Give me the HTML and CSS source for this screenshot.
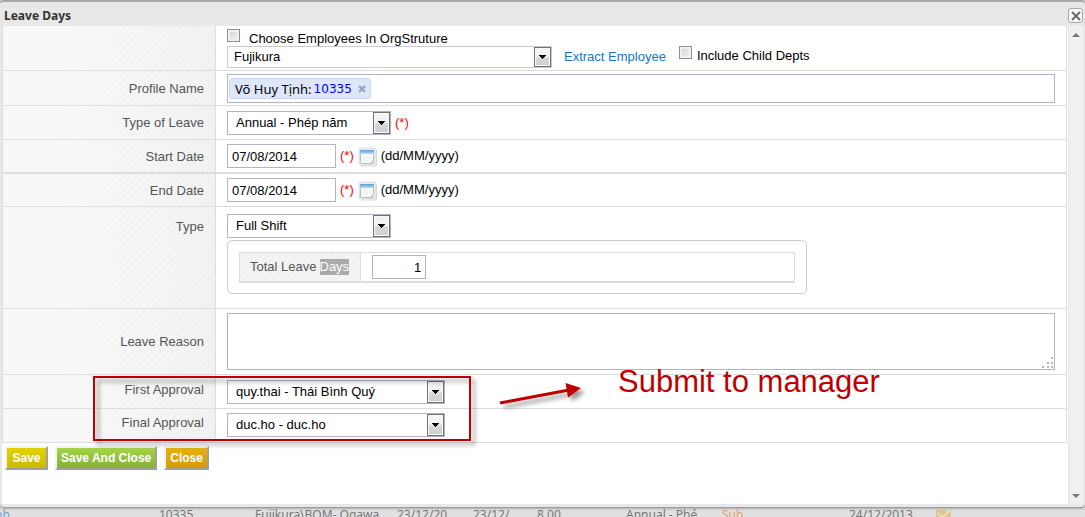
FILE: index.html
```html
<!DOCTYPE html>
<html lang="en">
<head>
<meta charset="utf-8">
<title>Leave Days</title>
<link rel="stylesheet" href="styles.css">
</head>
<body>
<svg class="defs" aria-hidden="true">
  <defs>
    <linearGradient id="calhead" x1="0" y1="0" x2="0" y2="1"><stop offset="0" stop-color="#5f9fd0"/><stop offset="1" stop-color="#b9dcf3"/></linearGradient>
    <symbol id="calendar" viewBox="0 0 20 20">
      <rect x="1" y="1" width="17" height="17" rx="2" fill="#ececec" stroke="#dcdcdc"/>
      <path d="M18.500 3V19H3" fill="none" stroke="#d8d8d8"/>
      <rect x="2.500" y="3.500" width="13" height="13" rx="1" fill="#fafafa" stroke="#b4bcc2"/>
      <rect x="2" y="3" width="14" height="4" fill="url(#calhead)"/>
      <path d="M5 9.500h9M5 11.500h9M5 13.500h6" stroke="#e6ebee" stroke-dasharray="2 1"/>
      <path d="M12 16l4-4v4z" fill="#c6ccd0"/>
    </symbol>
    <symbol id="arrow" viewBox="0 0 7 4"><path d="M0 0h7v1h-1v1h-1v1h-1v1h-1v-1h-1v-1h-1v-1h-1z" fill="#000"/></symbol>
  </defs>
</svg>
<section class="dialog">
  <header class="titlebar">
    <h1 class="title">Leave Days</h1>
    <button class="close" type="button" aria-label="Close window"><svg viewBox="0 0 10 10" width="10" height="10"><path d="M1 1l8 8M9 1l-8 8" stroke="#6a6a6a" stroke-width="2"/></svg></button>
  </header>
  <div class="body">
    <form class="form">
      <div class="rows">
        <div class="row">
          <div class="label"></div>
          <div class="field org">
            <label class="check"><input class="box" type="checkbox"><span class="choose">Choose Employees In OrgStruture</span></label>
            <div class="line">
              <span class="select wide"><select aria-label="Department"><option>Fujikura</option></select><span class="drop"><svg><use href="#arrow"/></svg></span></span>
              <a class="link" href="#">Extract Employee</a>
              <label class="check child"><input class="box" type="checkbox"><span class="include">Include Child Depts</span></label>
            </div>
          </div>
        </div>
        <div class="row">
          <label class="label" for="profile">Profile Name</label>
          <div class="field profile"><div class="tags"><span class="tag">Võ Huy Tịnh:<span class="code">10335</span><button class="remove" type="button" aria-label="Remove"><svg viewBox="0 0 8 8" width="8" height="8"><path d="M1 1l6 6M7 1l-6 6" stroke="#98a3bd" stroke-width="2.400"/></svg></button></span><input class="taginput" id="profile" type="text"></div></div>
        </div>
        <div class="row">
          <label class="label" for="leavetype">Type of Leave</label>
          <div class="field"><span class="select"><select id="leavetype"><option>Annual - Phép năm</option></select><span class="drop"><svg><use href="#arrow"/></svg></span></span><span class="req">(*)</span></div>
        </div>
        <div class="row thick">
          <label class="label" for="start">Start Date</label>
          <div class="field even"><input class="text date" id="start" type="text" value="07/08/2014"><span class="req">(*)</span><svg class="cal"><use href="#calendar"/></svg><span class="format">(dd/MM/yyyy)</span></div>
        </div>
        <div class="row">
          <label class="label" for="end">End Date</label>
          <div class="field even"><input class="text date" id="end" type="text" value="07/08/2014"><span class="req">(*)</span><svg class="cal"><use href="#calendar"/></svg><span class="format">(dd/MM/yyyy)</span></div>
        </div>
        <div class="row">
          <label class="label top" for="shift">Type</label>
          <div class="field stack">
            <span class="select"><select id="shift"><option>Full Shift</option></select><span class="drop"><svg><use href="#arrow"/></svg></span></span>
            <div class="panel">
              <div class="total">
                <label class="totallabel" for="total">Total Leave <span class="picked">Days</span></label>
                <div class="totalfield"><input class="text number" id="total" type="text" value="1"></div>
              </div>
            </div>
          </div>
        </div>
        <div class="row">
          <label class="label" for="reason">Leave Reason</label>
          <div class="field even"><div class="areawrap"><textarea class="area" id="reason"></textarea><svg class="grip" viewBox="0 0 12 12"><path d="M9 0h2v2h-2zM5 5h2v2h-2zM9 5h2v2h-2zM0 9h2v2h-2zM5 9h2v2h-2zM9 9h2v2h-2z" fill="#b8b8b8"/></svg></div></div>
        </div>
        <div class="approvals">
          <div class="row">
            <label class="label raised" for="first">First Approval</label>
            <div class="field"><span class="select mid"><select id="first"><option>quy.thai - Thái Bình Quý</option></select><span class="drop"><svg><use href="#arrow"/></svg></span></span></div>
          </div>
          <div class="row last">
            <label class="label raised" for="final">Final Approval</label>
            <div class="field"><span class="select mid"><select id="final"><option>duc.ho - duc.ho</option></select><span class="drop"><svg><use href="#arrow"/></svg></span></span></div>
          </div>
          <div class="frame"></div>
          <svg class="pointer" viewBox="0 0 100 40"><path d="M6 26L75 13" stroke="#c00000" stroke-width="3"/><path d="M71.500 6L87 11L74 20.500z" fill="#c00000"/></svg>
          <p class="note">Submit to manager</p>
        </div>
      </div>
      <div class="actions">
        <button class="btn save" type="button">Save</button>
        <button class="btn saveclose" type="button">Save And Close</button>
        <button class="btn cancel" type="button">Close</button>
      </div>
    </form>
    <div class="scroll">
      <svg viewBox="0 0 8 4" width="8" height="4"><path d="M0 4L4 0L8 4z" fill="#777"/></svg>
      <svg viewBox="0 0 8 4" width="8" height="4"><path d="M0 0H8L4 4z" fill="#777"/></svg>
    </div>
  </div>
</section>
<div class="behind">
  <table class="list">
    <colgroup><col class="c1"><col class="c2"><col class="c3"><col class="c4"><col class="c5"><col class="c6"><col class="c7"><col class="c8"><col class="c9"><col></colgroup>
    <tr><td><a class="name" href="#">nh</a></td><td>10335</td><td>Fujikura\BOM- Ogawa</td><td>23/12/20</td><td>23/12/</td><td>8.00</td><td>Annual - Phé</td><td class="sub">Sub</td><td>24/12/2013</td><td><svg class="edit" viewBox="0 0 17 12"><path d="M1 1h10l1 3l4-3v6l-5 5H1z" fill="#dcc595"/><path d="M3 4l4 4l8-6" fill="none" stroke="#f0deb5" stroke-width="2"/></svg></td></tr>
  </table>
</div>
</body>
</html>
```
FILE: styles.css
```css
* { box-sizing: border-box; }
body {
  margin: 0;
  height: 100vh;
  overflow: hidden;
  display: flex;
  flex-direction: column;
  background: #e0e0e0;
  color: #000;
  font: 13px/16px "Liberation Sans", Arial, sans-serif;
}
.defs { position: absolute; width: 0; height: 0; }
input, select, textarea, button { font: inherit; color: inherit; margin: 0; }

.dialog {
  flex: 1;
  min-height: 0;
  display: flex;
  flex-direction: column;
  background: #e8e8e8;
  border-top: 2px solid #a9a9a9;
  border-radius: 4px;
  padding: 0 2px 3px;
  box-shadow: 0 1px 3px #777;
  position: relative;
}
.titlebar { display: flex; align-items: center; justify-content: space-between; height: 24px; padding: 3px 0 0 2px; }
.title { margin: 0; font: bold 12px/20px "Noto Sans", sans-serif; color: #333; }
.close {
  display: flex; align-items: center; justify-content: center;
  width: 15px; height: 15px; padding: 0;
  background: #fafafa; border: 1px solid #aaa; border-radius: 3px;
}
.body { flex: 1; min-height: 0; display: flex; background: #fff; }
.form { flex: 1; }
.rows { border: solid #ddd; border-width: 0 1px 0 1px; }
.row { display: grid; grid-template-columns: 213px 1fr; border-bottom: 1px solid #ddd; }
.thick { border-bottom-width: 2px; }
.label {
  display: flex; align-items: center; justify-content: flex-end;
  padding: 1px 11px 0 0;
  color: #555;
  border-right: 1px solid #ddd;
  background:
    linear-gradient(to right, #f8f8f8 25%, rgba(244, 244, 244, 0)),
    repeating-linear-gradient(135deg, #f0f0f0 0 3px, #f4f4f4 3px 5px);
}
.top { align-items: flex-start; padding-top: 12px; }
.raised { align-items: flex-start; padding-top: 7px; }
.field { display: flex; align-items: center; min-height: 32px; padding: 5px 11px 4px; }
.even { padding: 4px 11px; }
.org { flex-direction: column; align-items: stretch; padding: 3px 11px 2px; }
.profile { padding: 3px 11px 2px; }
.last .label { padding-top: 6px; }
.last .field { padding: 4px 11px 5px; }
.check { display: flex; align-items: flex-start; }
.line { display: flex; align-items: center; }
.choose { padding: 2px 0 0 9px; line-height: 15px; }
.box {
  appearance: none;
  width: 13px; height: 13px;
  border: 1px solid #8e8f8f;
  background: linear-gradient(135deg, #ccd0d5, #f6f6f6);
  box-shadow: inset 0 0 0 2px #f1f1f1;
}
.link { margin-left: 12px; color: #1378c4; text-decoration: none; }
.child { margin-left: 13px; align-self: flex-start; }
.include { padding: 2px 0 0 5px; }

.select { position: relative; display: block; width: 164px; height: 24px; background: #fff; border: 1px solid #b3b3c6; }
.select select { appearance: none; width: 100%; height: 100%; padding: 0 20px 0 8px; border: 0; background: none; }
.wide { width: 325px; height: 22px; border-color: #ccc; }
.wide select { padding-left: 6px; }
.mid { width: 218px; }
.drop {
  position: absolute; right: 0; top: 0; bottom: 0; width: 17px;
  display: flex; align-items: center; justify-content: center;
  border: 1px solid #707070;
  box-shadow: inset 0 0 0 1px #fafafa;
  background: linear-gradient(#f3f3f3 45%, #d8d8d8 55%, #cfcfcf);
  pointer-events: none;
}
.drop svg { width: 7px; height: 4px; }

.text { height: 24px; padding: 0 4px; border: 1px solid #b3b3c6; background: #fff; }
.date { width: 109px; }
.req { margin-left: 4px; color: #f00; }
.cal { width: 20px; height: 20px; margin: 2px 3px 0 4px; }

.tags { flex: 1; display: flex; align-items: center; height: 29px; padding: 0 1px; border: 1px solid #b3b3c6; }
.tag {
  display: flex; align-items: center;
  height: 21px; padding: 0 4px 0 5px;
  font: 13px/18px "Noto Sans", sans-serif;
  background: #dee7f8; border: 1px solid #cad8f3; border-radius: 3px;
}
.code { margin-left: 2px; color: #00f; font-family: "DejaVu Sans", sans-serif; font-size: 12px; }
.remove { display: flex; padding: 0; margin-left: 6px; border: 0; background: none; }
.taginput { flex: 1; border: 0; outline: 0; }

.stack { flex-direction: column; align-items: flex-start; padding: 7px 11px 14px; }
.panel { width: 100%; max-width: 580px; margin-top: 2px; padding: 11px 11px 10px; border: 1px solid #ccc; border-radius: 5px; }
.total { display: flex; border: 1px solid #ddd; border-bottom-width: 2px; }
.totallabel {
  display: flex; align-items: center; gap: 3px;
  padding: 0 11px 0 10px; color: #555; border-right: 1px solid #ddd;
  background: repeating-linear-gradient(135deg, #f1f1f1 0 3px, #f5f5f5 3px 5px);
}
.picked { background: #aaa; color: #fff; }
.totalfield { padding: 2px 11px; }
.number { display: block; width: 54px; text-align: right; }

.areawrap { position: relative; flex: 1; display: flex; }
.area { flex: 1; height: 57px; border: 1px solid #b3b3c6; resize: none; }
.grip { position: absolute; right: 1px; bottom: 1px; width: 12px; height: 12px; }

.approvals { position: relative; }
.frame {
  position: absolute; left: 90px; top: 1px; width: 378px; height: 65px;
  border: 2px solid #c00000;
  filter: drop-shadow(4px 4px 2px rgba(0, 0, 0, 0.4));
  pointer-events: none;
}
.pointer {
  position: absolute; left: 491px; top: 2px; width: 100px; height: 40px; overflow: visible;
  filter: drop-shadow(4px 4px 2px rgba(0, 0, 0, 0.4));
}
.note { position: absolute; left: 615px; top: -11px; margin: 0; font-size: 31px; line-height: 36px; color: #c00000; white-space: nowrap; }

.actions { display: flex; gap: 7px; padding: 3px; }
.btn {
  height: 24px; min-width: 43px; padding: 0 4px;
  border: 2px solid; border-color: #f4f4f4 #a0a0a0 #a0a0a0 #f4f4f4;
  color: #fff; font-size: 12px; font-weight: bold;
}
.save { background: linear-gradient(#e2d200, #cdbb00); }
.saveclose { background: linear-gradient(#a5d447, #84b135); }
.cancel { background: linear-gradient(#e8b012, #d69a05); }

.scroll {
  width: 15px; margin-left: 1px; padding: 7px 0 6px;
  display: flex; flex-direction: column; align-items: center; justify-content: space-between;
  background: #f0f0f0; border-left: 1px solid #e4e4e4;
}

.behind { height: 10px; overflow: hidden; }
.list { width: 100%; table-layout: fixed; border-collapse: collapse; font: 12px/16px "Noto Sans", sans-serif; color: #777; }
.list td { padding: 0; white-space: nowrap; }
.name { display: block; margin-left: -5px; color: #6fa5cf; text-decoration: none; }
.sub { color: #e0a070; }
.edit { display: block; width: 17px; height: 12px; }
.c1 { width: 159px; }
.c2 { width: 96px; }
.c3 { width: 142px; }
.c4 { width: 76px; }
.c5 { width: 64px; }
.c6 { width: 89px; }
.c7 { width: 96px; }
.c8 { width: 127px; }
.c9 { width: 86px; }
```
